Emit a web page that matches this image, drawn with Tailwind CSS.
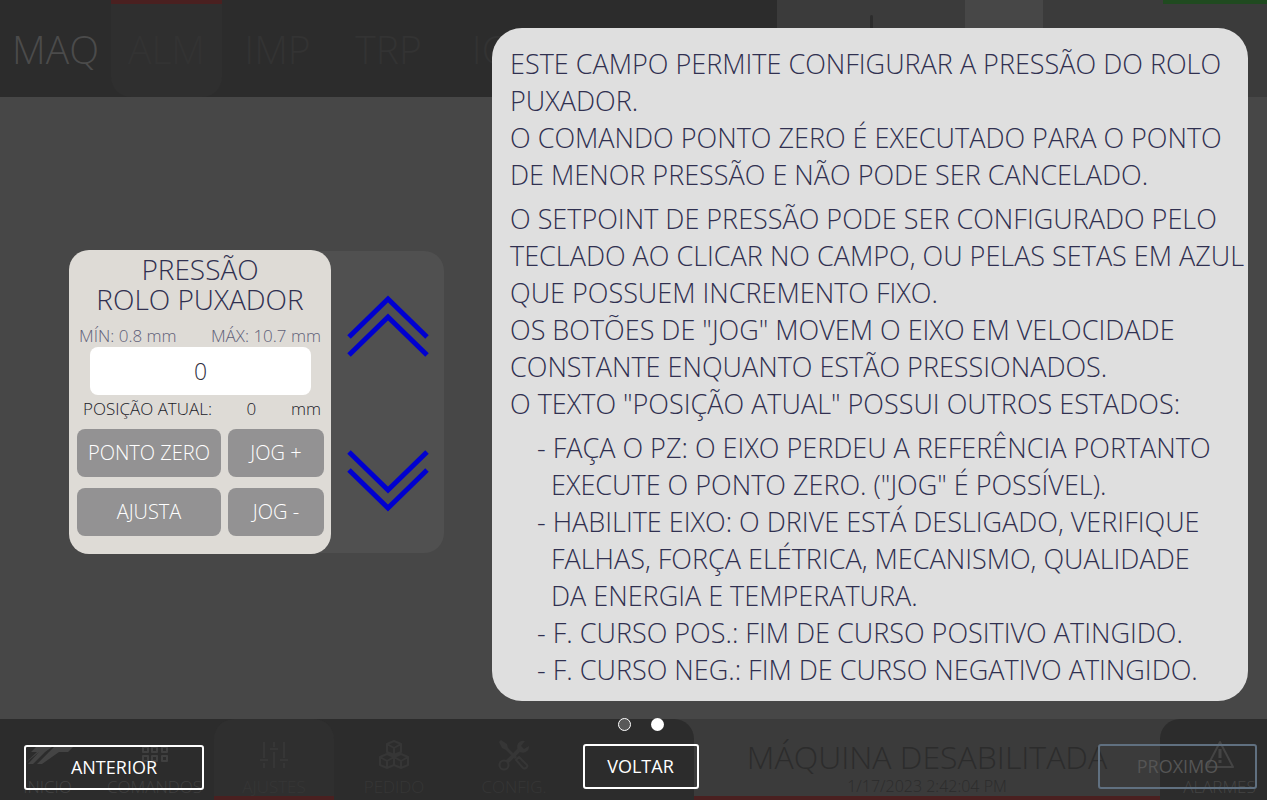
<!DOCTYPE html>
<html lang="pt-BR">
<head>
<meta charset="utf-8">
<meta name="viewport" content="width=device-width, initial-scale=1">
<title>Pressão rolo puxador</title>
<script src="https://cdn.jsdelivr.net/npm/@tailwindcss/browser@4"></script>
</head>
<body class="relative flex min-h-screen flex-col bg-[#474747] font-['Open_Sans','Noto_Sans',sans-serif] font-light">

<!-- Machine screen, dimmed -->
<header class="flex h-[97px] bg-[#2c2c2c] text-[39px] leading-10 text-[#333333]">
  <nav class="flex flex-1 text-center">
    <a href="#maq" class="w-[111px] pt-[29px] text-[#4b4b4b]">MAQ</a>
    <a href="#alm" class="w-[111px] rounded-b-[20px] border-t-4 border-[#4a2020] bg-[#2f2f2f] pt-[25px]">ALM</a>
    <a href="#imp" class="w-[111px] pt-[29px]">IMP</a>
    <a href="#trp" class="w-[111px] pt-[29px]">TRP</a>
    <a href="#ics" class="w-[111px] pt-[29px]">ICS</a>
  </nav>
  <div class="flex w-[490px] bg-[#3b3b3b]">
    <div class="flex w-[188px] justify-center pt-[15px]"><span class="h-14 w-[3px] rounded-full bg-[#2c2c2c]"></span></div>
    <div class="w-[78px] bg-[#474747]"></div>
    <div class="flex flex-1 justify-end"><div class="h-1 w-[104px] bg-[#204a20]"></div></div>
  </div>
</header>

<main class="flex-1"></main>

<footer class="flex h-[81px] bg-[#3b3b3b] text-[17px] leading-none">
  <nav class="flex w-[694px] rounded-tr-[20px] bg-[#2c2c2c] text-center text-[#363636]">
    <a href="#inicio" class="flex w-[95px] flex-col items-center justify-end gap-1.5 pb-[5px] text-[#444444]">
      <svg class="h-[34px] w-[50px]" viewBox="0 0 50 34" fill="currentColor"><path d="M1 26L14 14H8L13 9H29L22 14L10 26H5L16 14ZM31 9H50L45 14H36L19 26H14L26 14Z"/></svg>
      INICIO
    </a>
    <a href="#comandos" class="flex w-[119px] flex-col items-center justify-end gap-1.5 pb-[5px] text-[#404040]">
      <svg class="h-[34px] w-[34px]" viewBox="0 0 34 34" fill="none" stroke="currentColor" stroke-width="2" stroke-linejoin="round"><path d="M5 9h5v5H5zM14 9h5v5h-5zM24 9h5v5h-5zM5 18h5v5H5zM14 18h5v5h-5zM24 18h5v5h-5z"/></svg>
      COMANDOS
    </a>
    <a href="#ajustes" class="flex w-[120px] flex-col items-center justify-end gap-1.5 rounded-t-[20px] border-b-4 border-[#4a2020] bg-[#2f2f2f] pb-px text-[#363636]">
      <svg class="h-[34px] w-[34px]" viewBox="0 0 34 34" fill="none" stroke="currentColor" stroke-width="2"><path d="M7 4v16M7 25v5M3 22h8M17 4v5M17 14v16M13 11h8M27 4v16M27 25v5M23 22h8"/></svg>
      AJUSTES
    </a>
    <a href="#pedido" class="flex w-[120px] flex-col items-center justify-end gap-1.5 pb-[5px]">
      <svg class="h-[34px] w-[34px]" viewBox="0 0 34 34" fill="none" stroke="currentColor" stroke-width="2" stroke-linejoin="round"><path d="M17 3l7 3v8l-7 3-7-3V6zM10 6l7 4 7-4M17 10v7M10 16l7 3v8l-7 3-7-3v-8zM3 19l7 4 7-4M10 23v7M24 16l7 3v8l-7 3-7-3v-8zM17 19l7 4 7-4M24 23v7"/></svg>
      PEDIDO
    </a>
    <a href="#config" class="flex w-[120px] flex-col items-center justify-end gap-1.5 pb-[5px]">
      <svg class="h-[34px] w-[34px]" viewBox="0 0 34 34" fill="none" stroke="currentColor" stroke-width="2" stroke-linejoin="round"><path d="M2 4L4 2L10 6L11 10L20 19L18 21L9 12L5 10Z" fill="currentColor" stroke="none"/><path d="M19 22L22 19L30 27Q31 29 29 30Q27 31 26 30Z"/><circle cx="7" cy="27" r="4.5"/><path d="M10 24L23 11" stroke-width="4"/><path d="M28 3A6 6 0 1 0 32 8L27 11L24 8Z" fill="currentColor" stroke="none"/></svg>
      CONFIG.
    </a>
  </nav>
  <div class="flex flex-1 flex-col items-center border-b-4 border-[#4a2020] pt-[19px] text-[#2c2c2c]">
    <p class="text-[32px] leading-[38px] whitespace-nowrap">MÁQUINA DESABILITADA</p>
    <p class="text-base leading-5">1/17/2023 2:42:04 PM</p>
  </div>
  <a href="#alarmes" class="flex w-[107px] flex-col items-center justify-end gap-1.5 rounded-tl-[20px] bg-[#2c2c2c] pb-[5px] pl-3 text-[#444444]">
    <svg class="h-[34px] w-[34px]" viewBox="0 0 34 34" fill="none" stroke="currentColor" stroke-width="2" stroke-linejoin="round"><path d="M17 4L30 29H4Z"/><path d="M17 11v9M17 22v3" stroke-width="3"/></svg>
    ALARMES
  </a>
</footer>

<!-- Help layer -->
<div class="absolute inset-0 flex flex-col">
  <div class="flex flex-1 items-start justify-between pt-7 pr-[19px] pl-[69px]">

    <section class="mt-[222px] flex items-center rounded-[20px]">
      <form class="z-10 h-[304px] w-[262px] rounded-[20px] bg-[#dedbd6] px-2 pt-1 text-[#303050]">
        <h1 class="text-center text-[28px] leading-[30px]">PRESSÃO<br>ROLO PUXADOR</h1>
        <div class="flex justify-between px-[2px] pt-[10px] text-[17px] leading-[23px] whitespace-nowrap text-[#606078]">
          <span>MÍN: 0.8 mm</span><span>MÁX: 10.7 mm</span>
        </div>
        <input aria-label="Pressão rolo puxador" value="0" class="mx-[13px] block h-12 w-[221px] rounded-lg bg-white text-center text-[23px] text-[#303040]">
        <div class="flex h-[34px] items-start justify-between pt-[2px] pr-[2px] pl-[6px] text-[17px] leading-[23px] text-[#202028]">
          <span>POSIÇÃO ATUAL:</span><output>0</output><span>mm</span>
        </div>
        <div class="grid grid-cols-[144px_96px] gap-x-[7px] gap-y-[11px] text-xl text-white">
          <button type="button" class="h-12 rounded-lg bg-[#939293]">PONTO ZERO</button>
          <button type="button" class="h-12 rounded-lg bg-[#939293]">JOG +</button>
          <button type="button" class="h-12 rounded-lg bg-[#939293]">AJUSTA</button>
          <button type="button" class="h-12 rounded-lg bg-[#939293]">JOG -</button>
        </div>
      </form>
      <div class="-ml-5 flex h-[302px] w-[133px] flex-col items-end justify-between rounded-r-[20px] bg-[#505050] pt-[44px] pr-[15px] pb-[41px]">
        <button type="button" aria-label="Aumentar pressão"><svg class="block h-[62px] w-[82px]" viewBox="0 0 82 62" fill="none" stroke="#0000d0" stroke-width="5"><path d="M2 42L41 4L80 42M2 60L41 22L80 60"/></svg></button>
        <button type="button" aria-label="Diminuir pressão"><svg class="block h-[62px] w-[82px]" viewBox="0 0 82 62" fill="none" stroke="#0000d0" stroke-width="5"><path d="M2 2L41 40L80 2M2 20L41 58L80 20"/></svg></button>
      </div>
    </section>

    <article class="w-[756px] rounded-[30px] bg-[#dfdfdf] pt-[17px] pb-[13px] pl-[18px] text-[27px] leading-[37px] whitespace-nowrap text-[#303050]">
      <p>ESTE CAMPO PERMITE CONFIGURAR A PRESSÃO DO ROLO<br>PUXADOR.<br>O COMANDO PONTO ZERO É EXECUTADO PARA O PONTO<br>DE MENOR PRESSÃO E NÃO PODE SER CANCELADO.</p>
      <p class="mt-[7px]">O SETPOINT DE PRESSÃO PODE SER CONFIGURADO PELO<br>TECLADO AO CLICAR NO CAMPO, OU PELAS SETAS EM AZUL<br>QUE POSSUEM INCREMENTO FIXO.<br>OS BOTÕES DE "JOG" MOVEM O EIXO EM VELOCIDADE<br>CONSTANTE ENQUANTO ESTÃO PRESSIONADOS.<br>O TEXTO "POSIÇÃO ATUAL" POSSUI OUTROS ESTADOS:</p>
      <ul class="mt-[7px] pl-[41px] -indent-[14px]">
        <li>- FAÇA O PZ: O EIXO PERDEU A REFERÊNCIA PORTANTO<div class="indent-0">EXECUTE O PONTO ZERO. ("JOG" É POSSÍVEL).</div></li>
        <li>- HABILITE EIXO: O DRIVE ESTÁ DESLIGADO, VERIFIQUE<div class="indent-0">FALHAS, FORÇA ELÉTRICA, MECANISMO, QUALIDADE<br>DA ENERGIA E TEMPERATURA.</div></li>
        <li>- F. CURSO POS.: FIM DE CURSO POSITIVO ATINGIDO.</li>
        <li>- F. CURSO NEG.: FIM DE CURSO NEGATIVO ATINGIDO.</li>
      </ul>
    </article>
  </div>

  <div class="flex flex-col gap-[13px] pr-[10px] pb-[10px] pl-6 font-normal">
    <div class="flex justify-center gap-5 pl-[1px]">
      <button type="button" aria-label="Página 1" class="size-[13px] rounded-full border border-white bg-[#585858]"></button>
      <button type="button" aria-label="Página 2" class="size-[13px] rounded-full bg-white"></button>
    </div>
    <div class="grid h-[46px] grid-cols-[1fr_auto_1fr] text-lg text-white">
      <button type="button" class="h-[45px] w-[180px] self-end rounded-[3px] border-2 border-white pb-[2px]">ANTERIOR</button>
      <button type="button" class="h-[45px] w-[116px] rounded-[3px] border-2 border-white pb-[2px]">VOLTAR</button>
      <button type="button" disabled class="h-[45px] w-[159px] justify-self-end rounded-[3px] border-2 border-[#607080] pb-[2px] text-[#555555]">PROXIMO</button>
    </div>
  </div>
</div>
</body>
</html>
